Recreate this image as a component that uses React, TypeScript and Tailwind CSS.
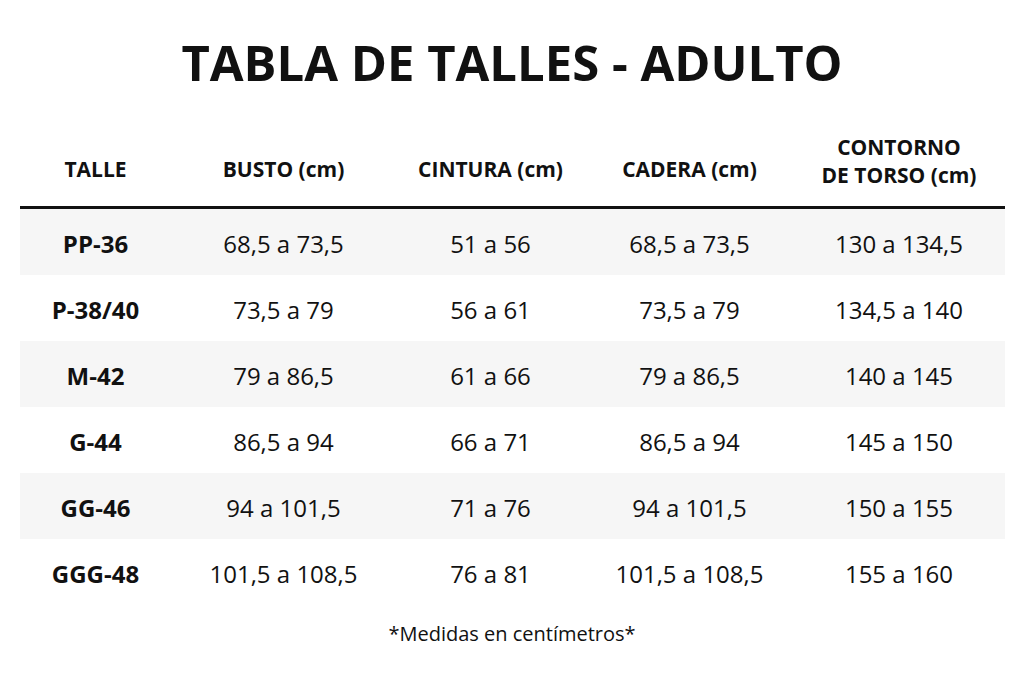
const rows = [
  ["PP-36", "68,5 a 73,5", "51 a 56", "68,5 a 73,5", "130 a 134,5"],
  ["P-38/40", "73,5 a 79", "56 a 61", "73,5 a 79", "134,5 a 140"],
  ["M-42", "79 a 86,5", "61 a 66", "79 a 86,5", "140 a 145"],
  ["G-44", "86,5 a 94", "66 a 71", "86,5 a 94", "145 a 150"],
  ["GG-46", "94 a 101,5", "71 a 76", "94 a 101,5", "150 a 155"],
  ["GGG-48", "101,5 a 108,5", "76 a 81", "101,5 a 108,5", "155 a 160"],
];

const cols = "grid grid-cols-[152px_224px_190px_208px_211px]";

export default function App() {
  return (
    <main className="w-[1024px] h-[682px] bg-white text-[#111] font-['Open_Sans','Lato',sans-serif] flex flex-col items-center">
      <h1 className="mt-[33px] text-[49px] leading-[58px] font-bold">
        TABLA DE TALLES - ADULTO
      </h1>

      <div className="mt-[37px] w-[985px]">
        <div className={`${cols} h-[78px] items-center text-center text-[21px] leading-[28px] font-bold pb-[4px]`}>
          <div className="pt-[8px]">TALLE</div>
          <div className="pt-[8px]">BUSTO (cm)</div>
          <div className="pt-[8px]">CINTURA (cm)</div>
          <div className="pt-[8px]">CADERA (cm)</div>
          <div className="pb-[8px]">
            CONTORNO
            <br />
            DE TORSO (cm)
          </div>
        </div>
        <div className="h-[3px] bg-[#111]" />

        {rows.map((r, i) => (
          <div
            key={r[0]}
            className={`${cols} h-[66px] items-center text-center text-[24px] pt-[3px] ${i % 2 === 0 ? "bg-[#f6f6f6]" : "bg-white"}`}
          >
            <div className="font-bold">{r[0]}</div>
            {r.slice(1).map((v, j) => (
              <div key={j}>{v}</div>
            ))}
          </div>
        ))}
      </div>

      <p className="mt-[14px] text-[20px]">*Medidas en centímetros*</p>
    </main>
  );
}
